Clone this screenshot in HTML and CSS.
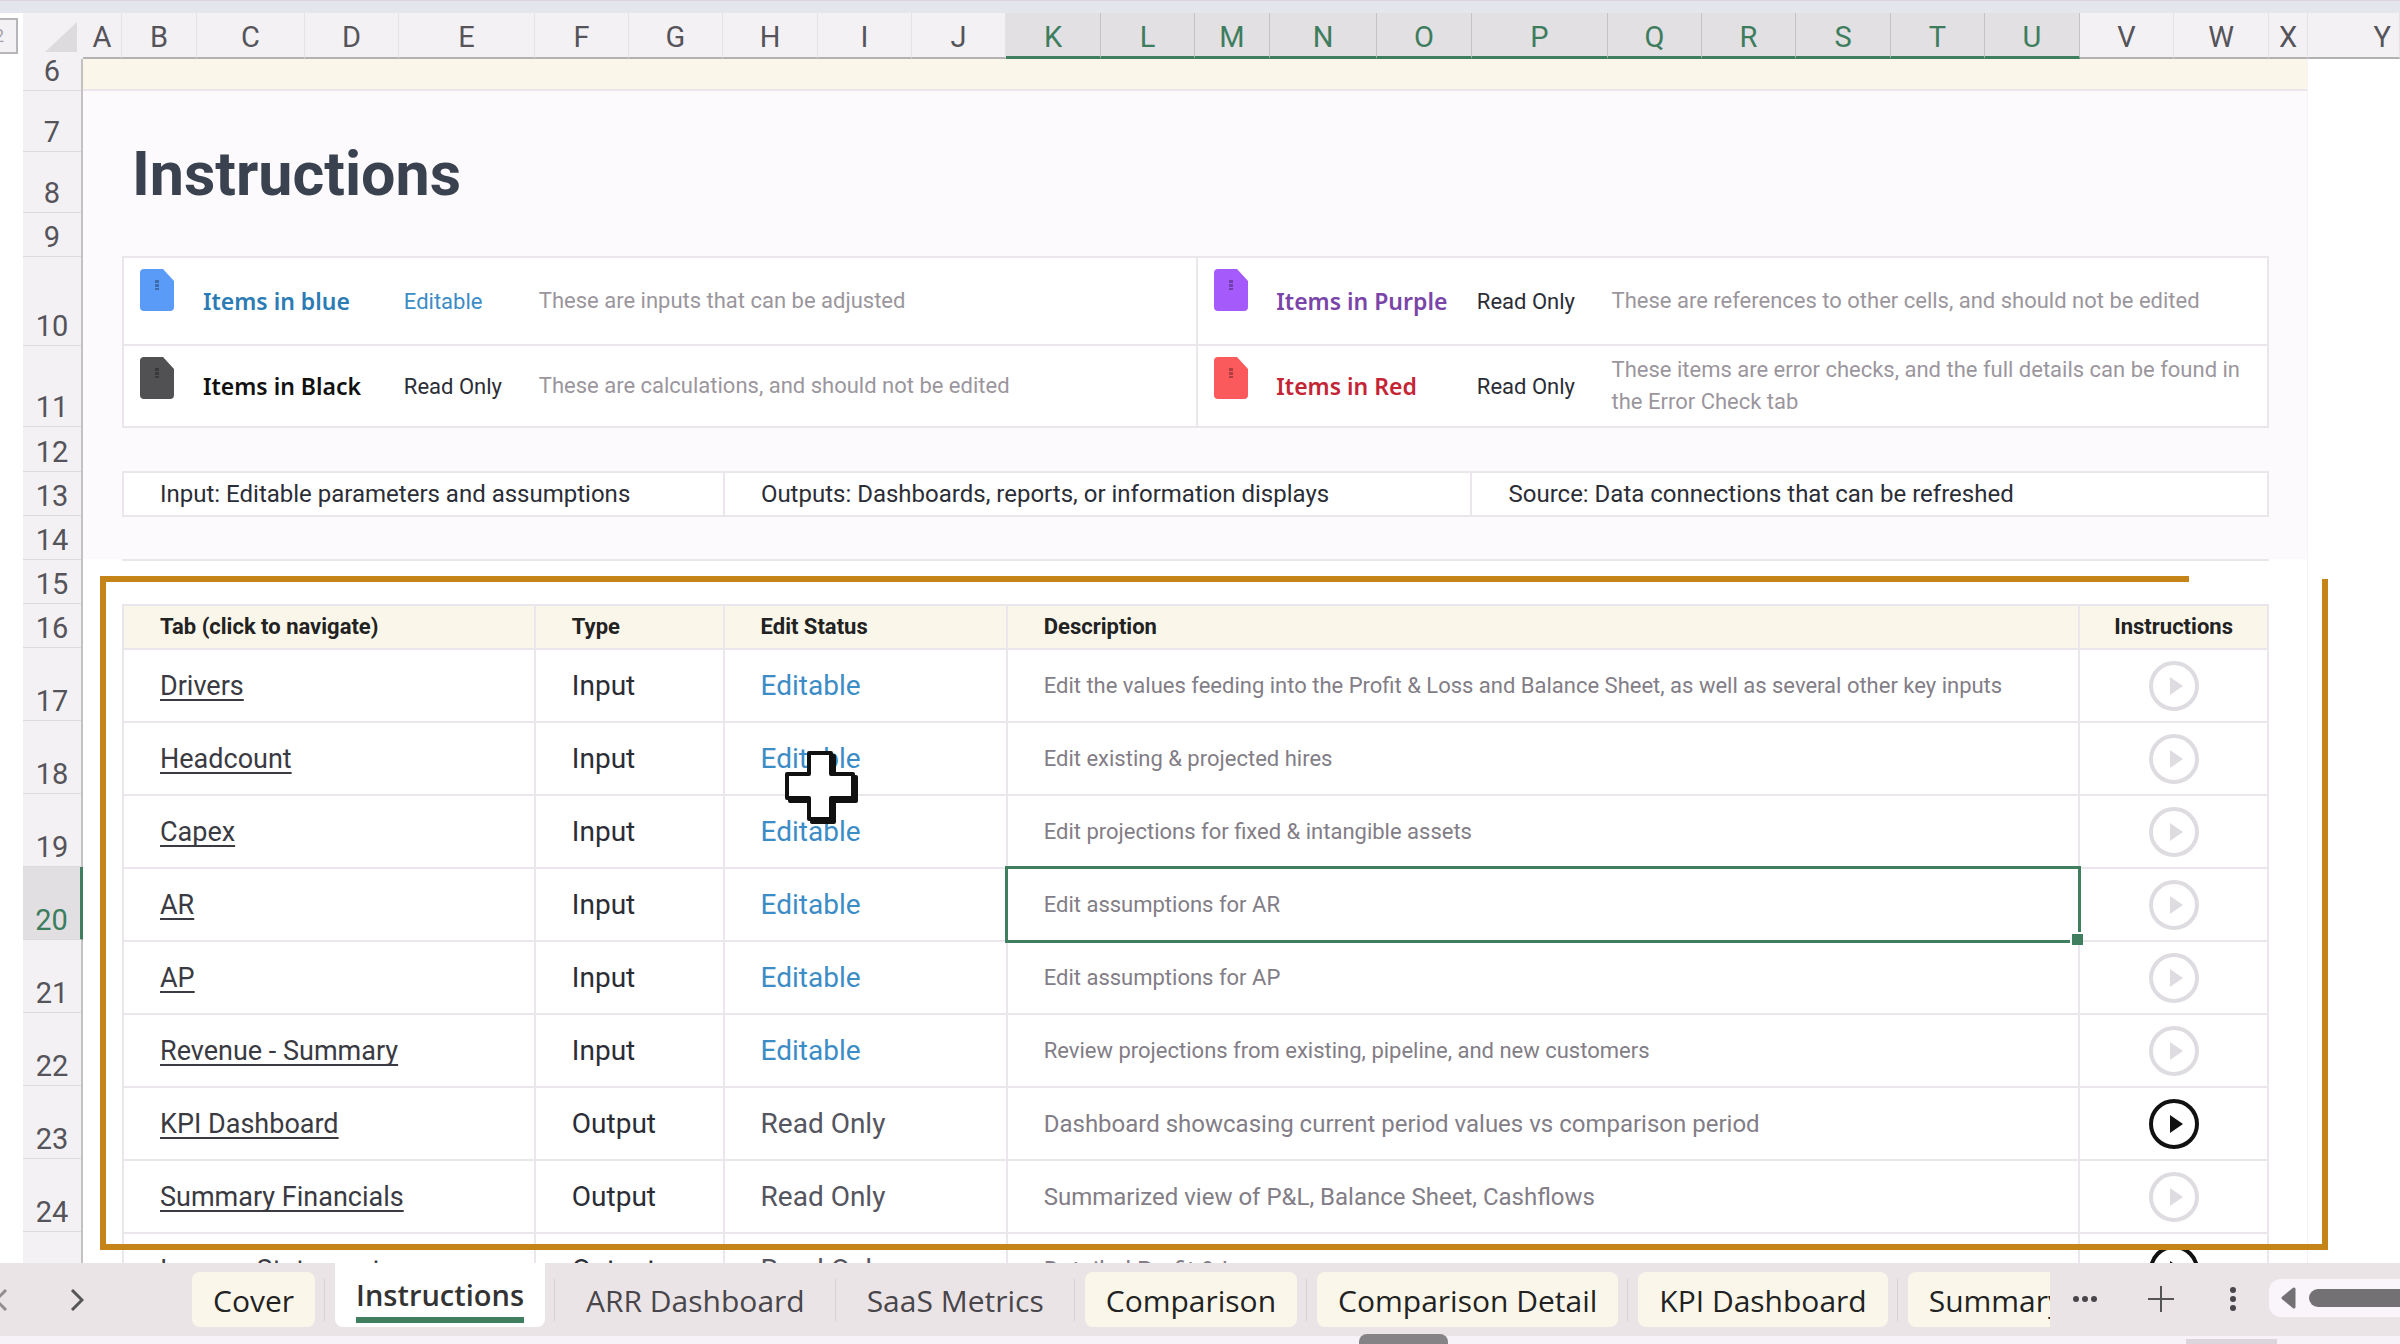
FILE: index.html
```
<!DOCTYPE html>
<html lang="en">
<head>
  <meta charset="UTF-8">
  <title>Instructions</title>
  <meta name="viewport" content="width=device-width, initial-scale=1.0">
  <link rel="stylesheet" href="styles.css">
</head>
<body>

<svg class="defs" aria-hidden="true">
  <symbol id="file" viewBox="0 0 34 42">
    <path d="M4 0H23L34 12V38Q34 42 30 42H4Q0 42 0 38V4Q0 0 4 0Z" fill="currentColor"/>
    <path d="M17 11V21" stroke="#000" stroke-opacity=".3" stroke-width="4" stroke-dasharray="3 1"/>
  </symbol>
  <symbol id="play" viewBox="0 0 50 50">
    <circle cx="25" cy="25" r="23" fill="none" stroke="currentColor" stroke-width="4"/>
    <path d="M21 16L34 25L21 34Z" fill="currentColor"/>
  </symbol>
</svg>

<div class="ribbon-edge"></div>

<header class="columns">
  <div class="outline"><span>2</span></div>
  <div class="corner"><svg width="32" height="30" viewBox="0 0 32 30"><path d="M32 0V30H0Z" fill="#dddbde"/></svg></div>
  <div>A</div><div>B</div><div>C</div><div>D</div><div>E</div><div>F</div><div>G</div><div>H</div><div>I</div><div>J</div>
  <div class="on">K</div><div class="on">L</div><div class="on">M</div><div class="on">N</div><div class="on">O</div><div class="on">P</div><div class="on">Q</div><div class="on">R</div><div class="on">S</div><div class="on">T</div><div class="on">U</div>
  <div>V</div><div>W</div><div>X</div><div class="last">Y</div>
</header>

<div class="workbook">
  <div class="rows">
    <div class="r33">6</div>
    <div class="r61">7</div>
    <div class="r61">8</div>
    <div class="r44">9</div>
    <div class="r89">10</div>
    <div class="r81">11</div>
    <div class="r45">12</div>
    <div class="r44">13</div>
    <div class="r44">14</div>
    <div class="r44">15</div>
    <div class="r44">16</div>
    <div>17</div>
    <div>18</div>
    <div>19</div>
    <div class="on">20</div>
    <div>21</div>
    <div>22</div>
    <div>23</div>
    <div>24</div>
    <div></div>
  </div>

  <main class="sheet">
    <div class="page">
      <div class="band"></div>

      <section class="intro">
        <h1>Instructions</h1>

        <div class="legend">
          <div class="key">
            <svg class="file blue"><use href="#file"/></svg>
            <strong class="t-blue">Items in blue</strong>
            <span class="status t-edit">Editable</span>
            <p>These are inputs that can be adjusted</p>
          </div>
          <div class="key">
            <svg class="file purple"><use href="#file"/></svg>
            <strong class="t-purple">Items in Purple</strong>
            <span class="status">Read Only</span>
            <p>These are references to other cells, and should not be edited</p>
          </div>
          <div class="key">
            <svg class="file black"><use href="#file"/></svg>
            <strong>Items in Black</strong>
            <span class="status">Read Only</span>
            <p>These are calculations, and should not be edited</p>
          </div>
          <div class="key">
            <svg class="file red"><use href="#file"/></svg>
            <strong class="t-red">Items in Red</strong>
            <span class="status">Read Only</span>
            <p>These items are error checks, and the full details can be found in the Error Check tab</p>
          </div>
        </div>

        <div class="kinds">
          <div>Input: Editable parameters and assumptions</div>
          <div>Outputs: Dashboards, reports, or information displays</div>
          <div>Source: Data connections that can be refreshed</div>
        </div>
      </section>

      <section class="index">
        <table>
          <colgroup>
            <col class="c-tab"><col class="c-type"><col class="c-status"><col class="c-desc"><col class="c-play">
          </colgroup>
          <thead>
            <tr><th>Tab (click to navigate)</th><th>Type</th><th>Edit Status</th><th>Description</th><th class="mid">Instructions</th></tr>
          </thead>
          <tbody>
            <tr>
              <td><a href="#">Drivers</a></td><td>Input</td><td class="t-edit">Editable</td>
              <td class="desc">Edit the values feeding into the Profit &amp; Loss and Balance Sheet, as well as several other key inputs</td>
              <td class="mid"><button class="play" aria-label="Play Drivers"><svg><use href="#play"/></svg></button></td>
            </tr>
            <tr>
              <td><a href="#">Headcount</a></td><td>Input</td>
              <td class="t-edit has-cursor">Editable
                <svg class="cursor" viewBox="0 0 74 74">
                  <path d="M27 5H49V26H71V50H49V71H27V50H5V26H27Z" fill="#111" stroke="#111" stroke-width="4" stroke-linejoin="round"/>
                  <path d="M24 2H46V23H68V47H46V68H24V47H2V23H24Z" fill="#fff" stroke="#111" stroke-width="4" stroke-linejoin="round"/>
                </svg>
              </td>
              <td class="desc">Edit existing &amp; projected hires</td>
              <td class="mid"><button class="play" aria-label="Play Headcount"><svg><use href="#play"/></svg></button></td>
            </tr>
            <tr>
              <td><a href="#">Capex</a></td><td>Input</td><td class="t-edit">Editable</td>
              <td class="desc">Edit projections for fixed &amp; intangible assets</td>
              <td class="mid"><button class="play" aria-label="Play Capex"><svg><use href="#play"/></svg></button></td>
            </tr>
            <tr>
              <td><a href="#">AR</a></td><td>Input</td><td class="t-edit">Editable</td>
              <td class="desc selected">Edit assumptions for AR</td>
              <td class="mid"><button class="play" aria-label="Play AR"><svg><use href="#play"/></svg></button></td>
            </tr>
            <tr>
              <td><a href="#">AP</a></td><td>Input</td><td class="t-edit">Editable</td>
              <td class="desc">Edit assumptions for AP</td>
              <td class="mid"><button class="play" aria-label="Play AP"><svg><use href="#play"/></svg></button></td>
            </tr>
            <tr>
              <td><a href="#">Revenue - Summary</a></td><td>Input</td><td class="t-edit">Editable</td>
              <td class="desc">Review projections from existing, pipeline, and new customers</td>
              <td class="mid"><button class="play" aria-label="Play Revenue - Summary"><svg><use href="#play"/></svg></button></td>
            </tr>
            <tr>
              <td><a href="#">KPI Dashboard</a></td><td>Output</td><td class="t-read">Read Only</td>
              <td class="desc large">Dashboard showcasing current period values vs comparison period</td>
              <td class="mid"><button class="play ready" aria-label="Play KPI Dashboard"><svg><use href="#play"/></svg></button></td>
            </tr>
            <tr>
              <td><a href="#">Summary Financials</a></td><td>Output</td><td class="t-read">Read Only</td>
              <td class="desc large">Summarized view of P&amp;L, Balance Sheet, Cashflows</td>
              <td class="mid"><button class="play" aria-label="Play Summary Financials"><svg><use href="#play"/></svg></button></td>
            </tr>
            <tr>
              <td><a href="#">Income Statement</a></td><td>Output</td><td class="t-read">Read Only</td>
              <td class="desc large">Detailed Profit &amp; Loss</td>
              <td class="mid"><button class="play ready" aria-label="Play Income Statement"><svg><use href="#play"/></svg></button></td>
            </tr>
          </tbody>
        </table>
      </section>
    </div>

    <div class="highlight"></div>
  </main>
</div>

<footer class="tabbar">
  <div class="arrows">
    <button aria-label="Previous sheet" class="dim"><svg width="14" height="22" viewBox="0 0 14 22"><path d="M12 1L2 11L12 21"/></svg></button>
    <button aria-label="Next sheet"><svg width="14" height="22" viewBox="0 0 14 22"><path d="M2 1L12 11L2 21"/></svg></button>
  </div>
  <nav class="tabs">
    <button class="tab cream">Cover</button>
    <button class="tab active"><span>Instructions</span></button>
    <button class="tab">ARR Dashboard</button>
    <button class="tab">SaaS Metrics</button>
    <button class="tab cream">Comparison</button>
    <button class="tab cream">Comparison Detail</button>
    <button class="tab cream">KPI Dashboard</button>
    <button class="tab cream">Summary Financials</button>
  </nav>
  <div class="tools">
    <button aria-label="More sheets"><svg width="26" height="8" viewBox="0 0 26 8"><circle cx="4" cy="4" r="3"/><circle cx="13" cy="4" r="3"/><circle cx="22" cy="4" r="3"/></svg></button>
    <button aria-label="Add sheet"><svg width="26" height="26" viewBox="0 0 26 26"><path d="M13 0V26M0 13H26" stroke="#555" stroke-width="2"/></svg></button>
    <button aria-label="Options" class="options"><svg width="8" height="24" viewBox="0 0 8 24"><circle cx="4" cy="3" r="3"/><circle cx="4" cy="12" r="3"/><circle cx="4" cy="21" r="3"/></svg></button>
  </div>
  <div class="scroll">
    <svg width="16" height="22" viewBox="0 0 16 22"><path d="M13 2V20L2 11Z" fill="#737174" stroke="#737174" stroke-width="3" stroke-linejoin="round"/></svg>
    <div class="thumb"></div>
  </div>
</footer>

<div class="status-edge">
  <div class="knob"></div>
  <div class="chip"></div>
</div>

</body>
</html>
```
FILE: styles.css
```
:root {
  --line: #eae6eb;
  --green: #3f7f60;
  --head: #f3f1f4;
  --cream: #faf7ea;
  --gold: #c58417;
}

* {
  box-sizing: border-box;
  margin: 0;
  padding: 0;
}

body {
  display: flex;
  flex-direction: column;
  height: 100vh;
  overflow: hidden;
  background: #fff;
  color: #2b2d36;
  font-family: Roboto, "Liberation Sans", sans-serif;
  font-size: 28px;
}

button {
  border: none;
  background: none;
  font: inherit;
  color: inherit;
  cursor: pointer;
}

.defs {
  position: absolute;
  width: 0;
  height: 0;
}

.ribbon-edge {
  flex: none;
  height: 13px;
  background: #e4e6ee;
  border-top: 1px solid #ddd3da;
}

/* column letters */
.columns {
  display: grid;
  grid-template-columns: 23fr 60fr 39fr 75fr 108fr 94fr 136fr 94fr 94fr 95fr 94fr 94fr 95fr 94fr 75fr 107fr 95fr 136fr 94fr 94fr 95fr 94fr 95fr 94fr 95fr 39fr 92fr;
  grid-template-rows: 46px;
  flex: none;
  height: 45px;
  font-size: 29px;
  line-height: 48px;
  text-align: center;
  color: #55545a;
}

.columns > div {
  min-width: 0;
  background: var(--head);
  border-right: 1px solid #e6e3e7;
  border-bottom: 2px solid #b3b1b4;
  position: relative;
  z-index: 1;
}

.columns .on {
  background: #e2e0e2;
  border-right-color: #c4c3c5;
  border-bottom: 3px solid var(--green);
  color: #3d7d5e;
}

.columns .last {
  padding-right: 8px;
  text-align: right;
}

.columns .outline {
  padding-top: 5px;
  background: #fff;
  border: none;
}

.outline span {
  display: block;
  width: 18px;
  height: 36px;
  overflow: hidden;
  border: 2px solid #b7b5b9;
  border-left: none;
  background: var(--head);
  color: #a5a3a7;
  font-size: 18px;
  line-height: 32px;
  direction: rtl;
  padding-right: 12px;
}

.columns .corner {
  display: flex;
  justify-content: flex-end;
  padding: 9px 6px 0 0;
  border: none;
}

/* grid body */
.workbook {
  display: grid;
  grid-template-columns: 23fr 60fr 2317fr;
  flex: 1;
  min-height: 0;
  overflow: hidden;
}

.rows {
  grid-column: 2;
  height: 0;
  min-height: 100%;
  background: var(--head);
  border-right: 2px solid #c4c1c5;
  color: #55545a;
  font-size: 29px;
  line-height: 36px;
  text-align: center;
}

.rows > div {
  display: flex;
  align-items: flex-end;
  justify-content: center;
  height: 73px;
  padding-bottom: 1px;
  border-bottom: 1px solid #dedbdf;
}

.rows .r33 { height: 33px; }
.rows .r44 { height: 44px; }
.rows .r45 { height: 45px; }
.rows .r61 { height: 61px; }
.rows .r81 { height: 81px; }
.rows .r89 { height: 89px; }

.rows .on {
  margin-right: -2px;
  background: #e1dfe2;
  border-right: 3px solid var(--green);
  color: #3d7d5e;
}

.sheet {
  position: relative;
  display: grid;
  grid-template-columns: 2225fr 92fr;
  height: 0;
}

.page {
  border-right: 1px solid #f6f2f7;
}

.band {
  height: 33px;
  background: var(--cream);
  border-bottom: 2px solid var(--line);
}

.intro,
.index {
  padding: 0 38px 0 39px;
}

.intro {
  height: 468px;
  background: #fcfafd;
}

h1 {
  height: 165px;
  padding: 43px 0 0 10px;
  color: #3b424f;
  font-size: 61px;
  font-weight: 700;
  line-height: 80px;
}

.legend {
  display: grid;
  grid-template-columns: 1fr 1fr;
  grid-template-rows: 88px 80px;
  background: #fff;
  border: 2px solid var(--line);
}

.key {
  display: grid;
  grid-template-columns: 79fr 201fr 135fr 657fr;
  align-items: center;
  color: #111;
}

.key:nth-child(even) {
  border-left: 2px solid var(--line);
}

.key:nth-child(-n+2) {
  border-bottom: 2px solid var(--line);
}

.key strong {
  font-family: "Noto Sans", sans-serif;
  font-size: 23px;
  font-weight: 600;
}

.key .status {
  color: #2b2d36;
  font-size: 22px;
}

.key p {
  padding-right: 16px;
  color: #9b969d;
  font-size: 22px;
  line-height: 32px;
}

.file {
  align-self: start;
  width: 34px;
  height: 42px;
  margin: 11px 0 0 16px;
}

.file.blue { color: #5b9bf8; }
.file.black { color: #515154; }
.file.purple { color: #a55bfb; }
.file.red { color: #fa5a5c; }

.key .t-blue { color: #2b7bb5; }
.key .t-purple { color: #7a45a8; }
.key .t-red { color: #c42535; }
.key .t-edit,
td.t-edit { color: #3c8cc6; }
td.t-read { color: #55555f; }

.kinds {
  display: grid;
  grid-template-columns: 600fr 749fr 798fr;
  height: 46px;
  margin-top: 43px;
  background: #fff;
  border: 2px solid var(--line);
  font-size: 24px;
  line-height: 42px;
}

.kinds div {
  padding-left: 36px;
}

.kinds div + div {
  border-left: 2px solid var(--line);
}

.index::before {
  content: "";
  display: block;
  height: 43px;
  border-top: 2px solid var(--line);
}

table {
  width: 100%;
  table-layout: fixed;
  border-collapse: collapse;
}

.c-tab { width: 19.2%; }
.c-type { width: 8.8%; }
.c-status { width: 13.2%; }
.c-desc { width: 50%; }
.c-play { width: 8.8%; }

th,
td {
  height: 73px;
  padding-left: 36px;
  border: 2px solid var(--line);
  line-height: 36px;
  text-align: left;
  vertical-align: middle;
  white-space: nowrap;
}

th {
  height: 44px;
  background: var(--cream);
  color: #222;
  font-size: 22px;
  font-weight: 700;
}

td a {
  color: #3a3a42;
  font-size: 27px;
  text-underline-offset: 4px;
  text-decoration-thickness: 2px;
  text-decoration-skip-ink: none;
}

.desc {
  color: #827d86;
  font-size: 22px;
}

.desc.large {
  font-size: 24px;
}

.mid {
  padding: 0;
  text-align: center;
}

.play {
  display: block;
  width: 50px;
  height: 50px;
  margin: 0 auto;
  color: #dfdce1;
}

.play.ready {
  color: #111;
}

.play svg {
  display: block;
  width: 50px;
  height: 50px;
}

.has-cursor,
.selected {
  position: relative;
}

.cursor {
  position: absolute;
  top: 28px;
  left: 60px;
  width: 74px;
  height: 74px;
  z-index: 1;
}

.selected::before {
  content: "";
  position: absolute;
  inset: -3px;
  border: 3px solid var(--green);
}

.selected::after {
  content: "";
  position: absolute;
  right: -5px;
  bottom: -5px;
  width: 11px;
  height: 11px;
  background: var(--green);
  border: 2px solid #fff;
  border-width: 2px 0 0 2px;
}

/* gold callout over the table, its top line stops short of the corner */
.highlight {
  position: absolute;
  top: 521px;
  left: 17px;
  right: 72px;
  height: 671px;
  border: 6px solid var(--gold);
  border-top: none;
  pointer-events: none;
}

.highlight::before {
  content: "";
  position: absolute;
  top: -3px;
  left: -6px;
  right: 133px;
  height: 6px;
  background: var(--gold);
}

/* sheet tabs */
.tabbar {
  position: relative;
  display: flex;
  flex: none;
  height: 73px;
  background: #ebe4e6;
  font-family: "Open Sans", sans-serif;
  font-size: 30px;
  color: #48464a;
}

.arrows {
  display: flex;
  align-items: center;
  justify-content: space-between;
  width: 90px;
  margin: 0 108px 0 -6px;
}

.arrows svg {
  display: block;
  fill: none;
  stroke: #555;
  stroke-width: 3;
}

.arrows .dim {
  opacity: 0.6;
}

.tabs {
  display: flex;
  flex: 1;
  min-width: 0;
  overflow: hidden;
}

.tab {
  flex: none;
  height: 55px;
  margin-top: 9px;
  padding: 0 21px;
  border-radius: 8px;
  line-height: 58px;
  white-space: nowrap;
}

.tab + .tab {
  position: relative;
  margin-left: 20px;
}

.tab + .tab::before {
  content: "";
  position: absolute;
  left: -11px;
  top: 7px;
  width: 1px;
  height: 42px;
  background: #d8d1d4;
}

.tab.cream {
  background: var(--cream);
  color: #222;
}

.tab.active {
  height: 64px;
  margin-top: 0;
  border-radius: 0 0 8px 8px;
  background: #fff;
  color: #333;
  font-size: 29px;
  font-weight: 600;
  line-height: 44px;
}

.tab.active::before {
  top: 16px;
}

.tab.active span {
  display: block;
  padding-top: 6px;
  border-bottom: 6px solid var(--green);
}

.tools {
  display: flex;
  align-items: center;
  justify-content: space-between;
  width: 219px;
  padding: 0 27px 2px 22px;
}

.tools .options {
  padding: 0 5px;
}

.tools button svg {
  display: block;
  fill: #48464a;
}

.scroll {
  display: flex;
  align-items: center;
  gap: 12px;
  width: 131px;
  height: 38px;
  margin-top: 16px;
  padding-left: 12px;
  border-radius: 12px 0 0 12px;
  background: #faf5fa;
}

.thumb {
  flex: 1;
  height: 18px;
  border-radius: 9px 0 0 9px;
  background: #737174;
}

.status-edge {
  position: relative;
  flex: none;
  height: 8px;
  background: #f7f1f8;
}

.knob {
  position: absolute;
  left: 1359px;
  bottom: 0;
  width: 89px;
  height: 10px;
  border-radius: 8px 8px 0 0;
  background: #858385;
}

.chip {
  position: absolute;
  right: 123px;
  bottom: 0;
  width: 91px;
  height: 5px;
  background: #dcd6dc;
}
```
